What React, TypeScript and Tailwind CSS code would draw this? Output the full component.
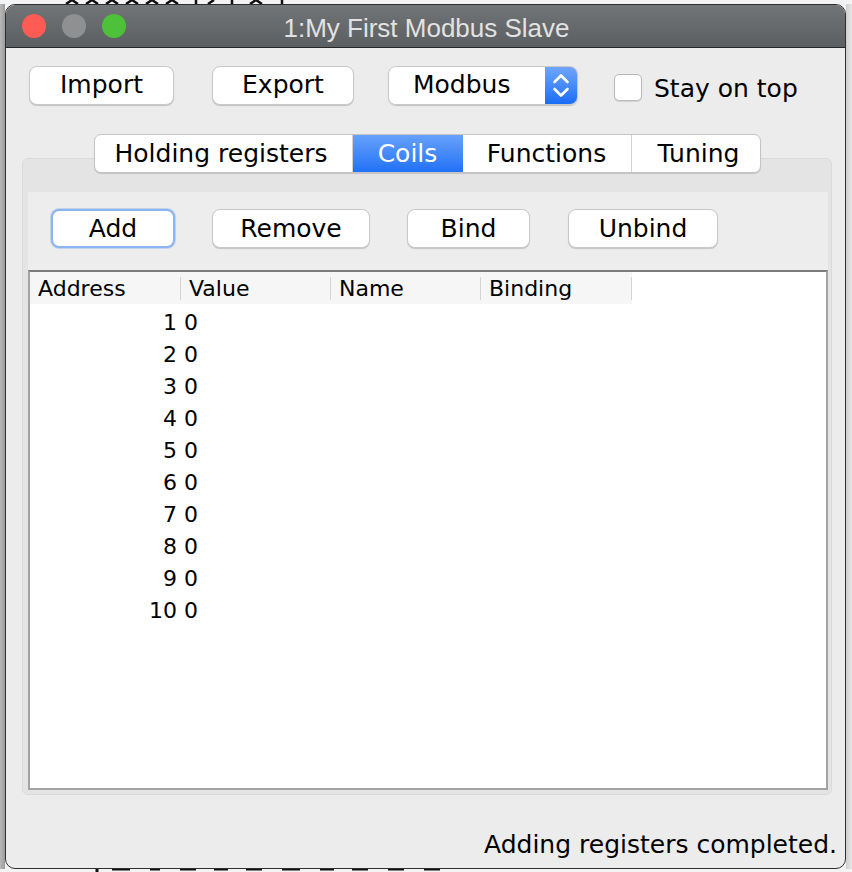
import React from "react";

const rows = [1, 2, 3, 4, 5, 6, 7, 8, 9, 10];

function Button({ label, width, focused }: { label: string; width: string; focused?: boolean }) {
  return (
    <div
      className={`${width} h-[39px] shrink-0 flex items-center justify-center bg-white rounded-[8px] text-[25px] text-black ${
        focused
          ? "border-2 border-[#8ab5f2] shadow-[0_0_0_1px_rgba(120,165,235,0.35)]"
          : "border border-[#c9c9c9] shadow-[0_1px_1px_rgba(0,0,0,0.18)]"
      }`}
    >
      {label}
    </div>
  );
}

function HeaderCell({ label, width }: { label: string; width: string }) {
  return (
    <div className={`${width} h-full flex items-center justify-between`}>
      <span className="pl-[8px]">{label}</span>
      <div className="w-px h-[23px] bg-[#d4d4d4]" />
    </div>
  );
}

export default function App() {
  return (
    <div className="w-[852px] h-[872px] bg-[#f3f3f3] flex flex-col overflow-hidden font-['DejaVu_Sans',sans-serif]">
      {/* desktop behind the window, top edge */}
      <div className="h-[4px] shrink-0">
        <svg width="852" height="4" viewBox="0 0 852 4">
          <path
            d="M66 4 L72 0 L78 4 M86 4 L92 0 L98 4 M106 4 L112 0 L118 4 M126 4 L132 0 L138 4 M146 4 L152 0 L158 4 M166 4 L172 0 L178 4 M196 0 L196 4 M208 4 L214 0 M232 0 L232 4 M250 4 L256 0 L262 4 M282 0 L282 4"
            stroke="#111"
            strokeWidth="2.5"
            fill="none"
          />
        </svg>
      </div>

      <div className="flex flex-1 min-h-0">
        <div className="w-[5px] shrink-0 bg-gradient-to-r from-[#b9b9b9] to-[#9c9c9c]" />

        {/* window */}
        <div className="flex-1 flex flex-col rounded-[10px] border border-[#2f2f2f] bg-[#ececec] overflow-hidden">
          {/* title bar */}
          <div className="h-[43px] shrink-0 grid grid-cols-[1fr_auto_1fr] items-center bg-gradient-to-b from-[#727577] to-[#5c5f61] border-b border-[#262626]">
            <div className="flex items-center gap-[16px] pl-[16px]">
              <div className="w-[24px] h-[24px] rounded-full bg-[#fd5b53]" />
              <div className="w-[24px] h-[24px] rounded-full bg-[#8e9092]" />
              <div className="w-[24px] h-[24px] rounded-full bg-[#4dc13a]" />
            </div>
            <div className="font-['Liberation_Sans',sans-serif] text-[26px] leading-[30px] pt-[3px] text-[#e2e2e2] pl-[2px]">
              1:My First Modbus Slave
            </div>
            <div />
          </div>

          {/* toolbar */}
          <div className="mt-[18px] h-[38px] flex items-center pl-[23px]">
            <Button label="Import" width="w-[145px]" />
            <div className="ml-[38px]">
              <Button label="Export" width="w-[142px]" />
            </div>
            <div className="ml-[34px] w-[190px] h-[39px] flex rounded-[8px] border border-[#c9c9c9] shadow-[0_1px_1px_rgba(0,0,0,0.18)] overflow-hidden">
              <div className="flex-1 bg-white flex items-center pl-[24px] text-[25px] text-black">Modbus</div>
              <div className="w-[32px] bg-gradient-to-b from-[#6ea5fb] to-[#176cf6] flex items-center justify-center">
                <svg width="32" height="38" viewBox="0 0 32 38">
                  <path d="M9.5 16 L16 9.5 L22.5 16 M9.5 23 L16 29.5 L22.5 23" stroke="#fff" strokeWidth="2.6" fill="none" strokeLinecap="round" strokeLinejoin="round" />
                </svg>
              </div>
            </div>
            <div className="ml-[36px] mt-[4px] w-[28px] h-[27px] rounded-[5px] bg-white border border-[#b9b9b9] shadow-[0_1px_1px_rgba(0,0,0,0.1)]" />
            <span className="ml-[12px] mt-[8px] text-[25px] text-black">Stay on top</span>
          </div>

          {/* tabs */}
          <div className="mt-[30px] relative z-10 flex justify-center pl-[3px]">
            <div className="h-[39px] flex rounded-[7px] border border-[#c4c4c4] bg-white overflow-hidden shadow-[0_1px_1px_rgba(0,0,0,0.15)] text-[25px]">
              <div className="w-[258px] flex items-center justify-center pr-[4px] text-black border-r border-[#d2d2d2]">Holding registers</div>
              <div className="w-[110px] flex items-center justify-center text-white bg-gradient-to-b from-[#66a1fb] to-[#1f71f6]">Coils</div>
              <div className="w-[169px] flex items-center justify-center text-black border-r border-[#d2d2d2]">Functions</div>
              <div className="w-[128px] flex items-center justify-center pl-[6px] text-black">Tuning</div>
            </div>
          </div>

          {/* tab panel */}
          <div className="-mt-[15px] ml-[16px] w-[810px] h-[637px] shrink-0 flex flex-col rounded-[6px] border border-[#dadada] bg-[#e4e4e4] pt-[33px] pl-[5px] pr-[3px] pb-[4px]">
            <div className="flex-1 flex flex-col bg-[#ededed]">
              <div className="mt-[17px] flex items-center pl-[23px]">
                <Button label="Add" width="w-[124px]" focused />
                <div className="ml-[37px]">
                  <Button label="Remove" width="w-[158px]" />
                </div>
                <div className="ml-[37px]">
                  <Button label="Bind" width="w-[123px]" />
                </div>
                <div className="ml-[38px]">
                  <Button label="Unbind" width="w-[150px]" />
                </div>
              </div>

              {/* table */}
              <div className="mt-[22px] h-[520px] flex flex-col bg-white border-2 border-[#a3a3a3] border-t-[#7c7c7c]">
                <div className="h-[32px] flex text-[22px] text-black">
                  <div className="flex h-full bg-[#f6f6f6]">
                    <HeaderCell label="Address" width="w-[151px]" />
                    <HeaderCell label="Value" width="w-[150px]" />
                    <HeaderCell label="Name" width="w-[150px]" />
                    <HeaderCell label="Binding" width="w-[151px]" />
                  </div>
                </div>
                <div className="pt-[2px] flex flex-col text-[22px] text-black">
                  {rows.map((n) => (
                    <div key={n} className="h-[32px] flex items-center">
                      <div className="w-[151px] text-right pr-[4px]">{n}</div>
                      <div className="pl-[3px]">0</div>
                    </div>
                  ))}
                </div>
              </div>
            </div>
          </div>

          {/* status */}
          <div className="flex-1" />
          <div className="h-[30px] mb-[8px] leading-[30px] text-right pr-[8px] text-[25px] text-black">
            Adding registers completed.
          </div>
        </div>

        <div className="w-[6px] shrink-0 bg-gradient-to-r from-[#cfcfcf] to-[#e6e6e6]" />
      </div>

      {/* desktop behind the window, bottom edge */}
      <div className="h-[3px] shrink-0">
        <svg width="852" height="3" viewBox="0 0 852 3">
          <path
            d="M97 0 L97 3 M112 0 L130 0 M150 0 L160 0 M180 0 L196 0 M214 0 L228 0 M246 0 L262 0 M282 0 L300 0 M320 0 L334 0 M352 0 L368 0 M388 0 L404 0 M424 0 L440 0"
            stroke="#111"
            strokeWidth="3"
            fill="none"
          />
        </svg>
      </div>
    </div>
  );
}
